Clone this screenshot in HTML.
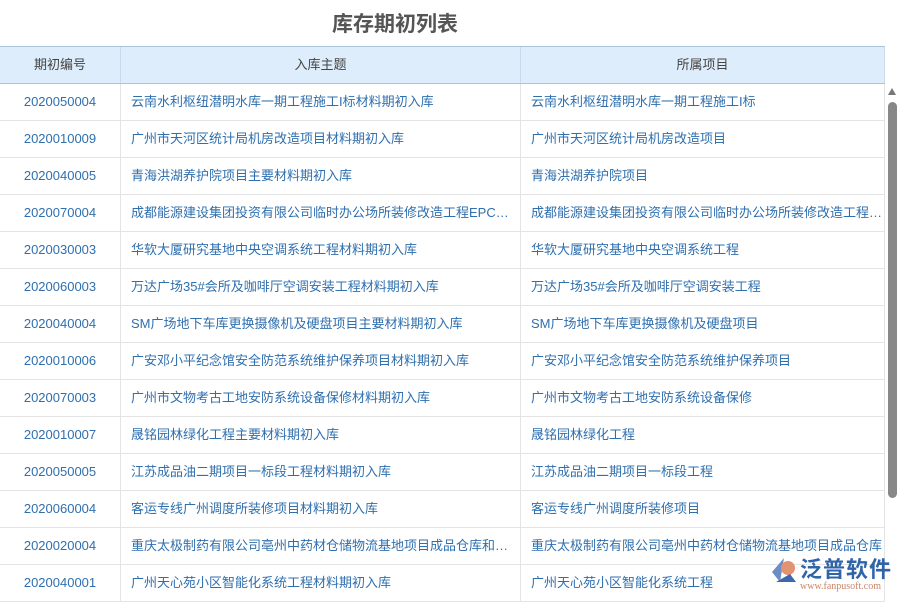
<!DOCTYPE html>
<html><head><meta charset="utf-8"><style>
body{margin:0;width:900px;height:600px;overflow:hidden;background:#fff;font-family:"Liberation Sans","Noto Sans CJK SC",sans-serif;position:relative}
.title{position:absolute;top:8px;left:0;width:790px;text-align:center;font-size:21px;font-weight:bold;color:#555}
.tb{position:absolute;top:46px;left:0;width:885px}
.r{display:flex;height:36px;border-bottom:1px solid #e4e4e4;font-size:13px;line-height:36px}
.r div{box-sizing:border-box;border-right:1px solid #e4e4e4;white-space:nowrap;overflow:hidden;text-overflow:ellipsis;color:#2f6fae;padding-left:10px}
.r div:nth-child(1){width:121px;text-align:center;padding:0}
.r div:nth-child(2){width:400px}
.r div:nth-child(3){width:364px}
.h{background:#deedfb;border-top:1px solid #a9c4dd;border-bottom:1px solid #a9c4dd;height:36px}
.h div{color:#444;text-align:center;padding:0!important;border-right:1px solid #c9dbeb}
.sb{position:absolute;left:888px;top:102px;width:9px;height:396px;background:#888;border-radius:5px}
.ar{position:absolute;left:888px;top:88px;width:0;height:0;border-left:4.5px solid transparent;border-right:4.5px solid transparent;border-bottom:7px solid #777}
.logo{position:absolute;left:800px;top:552px;font-size:22px;color:#2f64a8;font-weight:bold;letter-spacing:1px}
.url{position:absolute;left:800px;top:581px;font-size:10px;color:#c8856a;font-family:"Liberation Serif",serif}
</style></head><body>
<div class="title">库存期初列表</div>
<div class="tb">
<div class="r h"><div>期初编号</div><div>入库主题</div><div>所属项目</div></div>
<div class="r"><div>2020050004</div><div>云南水利枢纽潜明水库一期工程施工I标材料期初入库</div><div>云南水利枢纽潜明水库一期工程施工I标</div></div>
<div class="r"><div>2020010009</div><div>广州市天河区统计局机房改造项目材料期初入库</div><div>广州市天河区统计局机房改造项目</div></div>
<div class="r"><div>2020040005</div><div>青海洪湖养护院项目主要材料期初入库</div><div>青海洪湖养护院项目</div></div>
<div class="r"><div>2020070004</div><div>成都能源建设集团投资有限公司临时办公场所装修改造工程EPC总承包材料期初入库</div><div>成都能源建设集团投资有限公司临时办公场所装修改造工程EPC总承包</div></div>
<div class="r"><div>2020030003</div><div>华软大厦研究基地中央空调系统工程材料期初入库</div><div>华软大厦研究基地中央空调系统工程</div></div>
<div class="r"><div>2020060003</div><div>万达广场35#会所及咖啡厅空调安装工程材料期初入库</div><div>万达广场35#会所及咖啡厅空调安装工程</div></div>
<div class="r"><div>2020040004</div><div>SM广场地下车库更换摄像机及硬盘项目主要材料期初入库</div><div>SM广场地下车库更换摄像机及硬盘项目</div></div>
<div class="r"><div>2020010006</div><div>广安邓小平纪念馆安全防范系统维护保养项目材料期初入库</div><div>广安邓小平纪念馆安全防范系统维护保养项目</div></div>
<div class="r"><div>2020070003</div><div>广州市文物考古工地安防系统设备保修材料期初入库</div><div>广州市文物考古工地安防系统设备保修</div></div>
<div class="r"><div>2020010007</div><div>晟铭园林绿化工程主要材料期初入库</div><div>晟铭园林绿化工程</div></div>
<div class="r"><div>2020050005</div><div>江苏成品油二期项目一标段工程材料期初入库</div><div>江苏成品油二期项目一标段工程</div></div>
<div class="r"><div>2020060004</div><div>客运专线广州调度所装修项目材料期初入库</div><div>客运专线广州调度所装修项目</div></div>
<div class="r"><div>2020020004</div><div>重庆太极制药有限公司亳州中药材仓储物流基地项目成品仓库和材料期初入库</div><div>重庆太极制药有限公司亳州中药材仓储物流基地项目成品仓库</div></div>
<div class="r"><div>2020040001</div><div>广州天心苑小区智能化系统工程材料期初入库</div><div>广州天心苑小区智能化系统工程</div></div>
</div>
<div class="ar"></div><div class="sb"></div>
<svg style="position:absolute;left:770px;top:556px" width="28" height="28"><path d="M14 2 L2 16 L10 26 Z" fill="#6b8fc4"/><circle cx="18" cy="12" r="7" fill="#e39272"/><path d="M6 26 L26 26 L20 18 Z" fill="#3c68b0"/></svg>
<div class="logo">泛普软件</div>
<div class="url">www.fanpusoft.com</div>
</body></html>
